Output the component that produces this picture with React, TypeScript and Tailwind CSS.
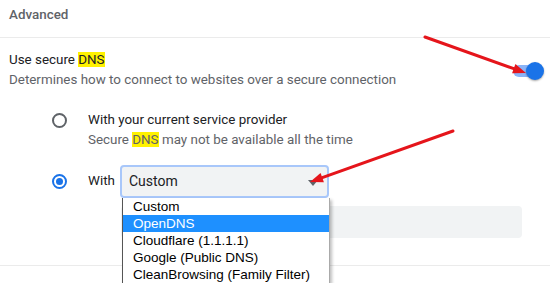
import React from "react"

const options = ["Custom", "OpenDNS", "Cloudflare (1.1.1.1)", "Google (Public DNS)", "CleanBrowsing (Family Filter)"]

function Hl({ children }: { children: React.ReactNode }) {
    return <span className="bg-[#fff200]">{children}</span>
}

function Arrow({ x1, y1, x2, y2 }: { x1: number; y1: number; x2: number; y2: number }) {
    const a = Math.atan2(y2 - y1, x2 - x1)
    const len = 13
    const w = 5
    const bx = x2 - Math.cos(a) * len
    const by = y2 - Math.sin(a) * len
    const px = -Math.sin(a) * w
    const py = Math.cos(a) * w
    return (
        <g>
            <line x1={x1} y1={y1} x2={bx} y2={by} stroke="#e5151b" strokeWidth={3} strokeLinecap="round" />
            <polygon points={`${x2},${y2} ${bx + px},${by + py} ${bx - px},${by - py}`} fill="#e5151b" />
        </g>
    )
}

export default function App() {
    return (
        <div className="relative w-[550px] h-[283px] overflow-hidden bg-white font-['Roboto',sans-serif] text-[13.4px] text-[#202124]">
            {/* section header */}
            <div className="h-[38px] px-[9px] pt-[5px] leading-[20px] text-[#5f6368] font-medium border-b border-[#ebebeb]">
                Advanced
            </div>

            {/* secure dns toggle row */}
            <div className="flex items-center justify-between pl-[9px] pr-[7px] pt-[12px]">
                <div className="leading-[20px]">
                    <div>Use secure <Hl>DNS</Hl></div>
                    <div className="text-[#5f6368]">Determines how to connect to websites over a secure connection</div>
                </div>
                <div className="relative w-[30px] h-[16px] mt-[2px]">
                    <div className="absolute left-0 top-[2px] w-[26px] h-[12px] rounded-full bg-[#8ab4f8]" />
                    <div className="absolute right-[-1px] top-[-1px] w-[18px] h-[18px] rounded-full bg-[#1a73e8] shadow-[0_1px_2px_rgba(0,0,0,0.35)]" />
                </div>
            </div>

            {/* radio options */}
            <div className="pl-[52px] pt-[20px]">
                <div className="flex items-start gap-[21px]">
                    <div className="mt-[3px] w-[15px] h-[15px] rounded-full border-2 border-[#5f6368]" />
                    <div className="leading-[20px]">
                        <div>With your current service provider</div>
                        <div className="text-[#5f6368]">Secure <Hl>DNS</Hl> may not be available all the time</div>
                    </div>
                </div>

                <div className="flex items-center mt-[15px]">
                    <div className="w-[15px] h-[15px] rounded-full border-2 border-[#1a73e8] flex items-center justify-center">
                        <div className="w-[7px] h-[7px] rounded-full bg-[#1a73e8]" />
                    </div>
                    <span className="ml-[21px] mr-[5px]">With</span>
                    <div className="relative w-[209px] h-[33px] rounded-[4px] border-2 border-[#a8c7fa] bg-[#f1f3f4] flex items-center pl-[7px] text-[14px]">
                        Custom
                        <svg className="absolute right-[9px] top-[13px]" width="10" height="6" viewBox="0 0 10 6">
                            <polygon points="0,0 10,0 5,6" fill="#5f6368" />
                        </svg>
                    </div>
                </div>

                <div className="ml-[69px] mt-[8px] w-[401px] h-[32px] rounded-[4px] bg-[#f1f3f4]" />
            </div>

            <div className="mt-[27px] border-t border-[#ebebeb]" />

            {/* open dropdown list */}
            <div className="absolute left-[122px] top-[198px] w-[208px] bg-white border-l border-[#555] border-r border-r-[#aaa] shadow-[2px_2px_3px_rgba(0,0,0,0.25)] font-['Liberation_Sans',sans-serif] text-[13.5px] text-black">
                {options.map((o, i) => (
                    <div
                        key={o}
                        className={i === 1 ? "h-[17px] leading-[17px] pl-[10px] bg-[#1e90ff] text-white" : "h-[17px] leading-[17px] pl-[10px]"}
                    >
                        {o}
                    </div>
                ))}
            </div>

            {/* annotation arrows */}
            <svg className="absolute inset-0 pointer-events-none" width="550" height="283">
                <Arrow x1={425} y1={37} x2={526} y2={73} />
                <Arrow x1={453} y1={131} x2={310} y2={182} />
            </svg>
        </div>
    )
}
